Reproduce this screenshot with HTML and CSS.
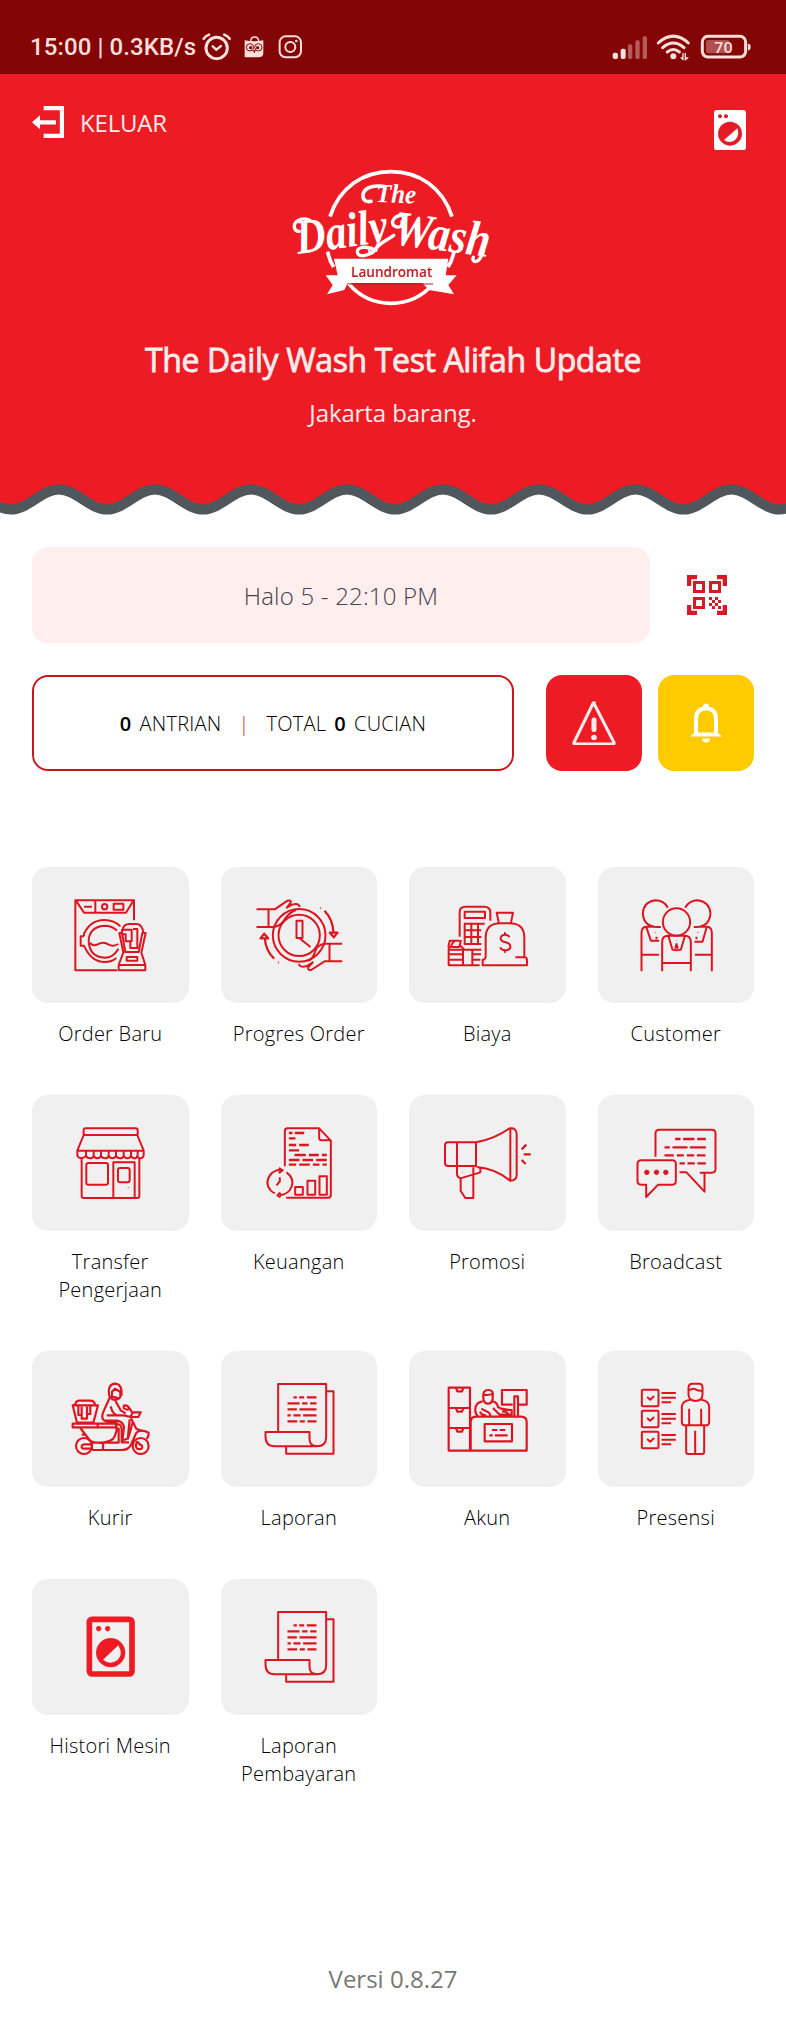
FILE: index.html
```html
<!DOCTYPE html>
<html lang="id">
<head>
<meta charset="utf-8">
<title>The Daily Wash</title>
<link rel="stylesheet" href="styles.css">
</head>
<body>
<svg class="defs" width="0" height="0" aria-hidden="true">
  <symbol id="report" viewBox="571.5 17 469.5 408">
    <path d="M743 258V116h144v159q0 28-28 28H732q-27 0-27-30v-13h132v20q0 22 22 22M889 138h20v187H767v-20"/>
    <path class="thick" d="M789 156h10m7 0h15m8 0h29M771 174h36m8 0h16m8 0h19M771 192h28m8 0h51M771 210h10m8 0h21m8 0h40M771 228h29m8 0h15m8 0h27"/>
  </symbol>
</svg>

<div class="statusbar">
  <span class="clock">15:00 | 0.3KB/s</span>
  <svg class="status-left" viewBox="606 95 304 90">
    <g fill="none" stroke="#ffdfdc" stroke-linecap="round">
      <circle cx="650" cy="143" r="32" stroke-width="9"/>
      <path d="M638 138l11 10 14-11" stroke-width="7"/>
      <path d="M611 115q6-9 16-12M689 115q-6-9-16-12" stroke-width="8"/>
      <rect x="839" y="108" width="64" height="63" rx="18" stroke-width="6"/>
      <circle cx="871" cy="140" r="15" stroke-width="6"/>
      <path d="M752 124q0-14 12-14t12 14" stroke-width="4"/>
    </g>
    <circle cx="889" cy="122" r="4" fill="#ffdfdc"/>
    <path d="M734 120q28 5 56 0v37q0 14-14 14h-42z" fill="#ffdfdc"/>
    <g fill="none" stroke="#840505" stroke-width="3"><circle cx="750" cy="141" r="11"/><circle cx="775" cy="141" r="11"/></g>
    <g fill="#840505"><circle cx="752" cy="142" r="5"/><circle cx="773" cy="142" r="5"/><path d="M758 150h10l-5 9z"/></g>
  </svg>
  <svg class="status-right" viewBox="655 95 424 90">
    <g fill="#ffdfdc">
      <rect x="660" y="157" width="16" height="19" rx="6"/><rect x="684" y="145" width="15" height="31" rx="6"/>
      <g opacity=".4"><rect x="706" y="132" width="13" height="44" rx="5"/><rect x="728" y="120" width="13" height="56" rx="5"/><rect x="750" y="108" width="13" height="68" rx="5"/></g>
      <circle cx="842" cy="168" r="9"/>
      <path d="M862 171h7v-13h4v22h-3zM876 158l4 0v13h9l-9 9h-4z"/>
      <path d="M1066 130q8 0 8 10t-8 10z"/>
    </g>
    <g fill="none" stroke="#ffdfdc" stroke-width="9" stroke-linecap="round">
      <path d="M797 128q45-41 90 0M810 142q32-28 64 0M824 155q18-15 36 0"/>
      <rect x="929" y="108" width="130" height="62" rx="17"/>
    </g>
    <rect x="940" y="119" width="71" height="40" rx="7" fill="#ffdfdc" opacity=".35"/>
    <text class="battery" x="965" y="158" textLength="55" lengthAdjust="spacingAndGlyphs">70</text>
  </svg>
</div>

<header class="hero">
  <div class="hero-top">
    <a class="logout">
      <svg viewBox="96 318 96 96" width="32" height="32"><path fill="none" stroke="#fff" stroke-width="13" d="M131 324h55v84h-55M114 367h54"/><path fill="#fff" d="M96 367l24-21v42z"/></svg>
      <span>KELUAR</span>
    </a>
    <svg class="machine" viewBox="963 330 96 121">
      <rect x="963" y="330" width="96" height="121" rx="9" fill="#fff"/>
      <g fill="#d51a2c"><circle cx="981" cy="349" r="6"/><circle cx="999" cy="349" r="6"/><circle cx="1011" cy="401" r="36" fill="#e41c28"/></g>
      <path fill="#fff" d="M1033 385l-40 35q17 12 34-1 14-14 6-34z"/>
    </svg>
  </div>
  <svg class="logo" viewBox="0 0 720 480">
    <g fill="none" stroke="#fff" stroke-width="11">
      <path d="M180 185C208 98 278 50 363 50s155 48 183 135M173 290q5 27 18 46M552 290q-5 27-18 46M236 386c34 40 77 59 127 59s93-19 127-59"/>
    </g>
    <path fill="#fff" d="M192 311h343l-8 50h33l-25 29 17 28-75-13-20-21H233l-10 21-52 13 17-28-21-29h36z"/>
    <path d="M237 387h252" stroke="#b81924" stroke-width="3"/>
    <g class="script">
      <text x="318" y="143" font-size="80" textLength="120" lengthAdjust="spacingAndGlyphs" transform="rotate(2 375 130)">The</text>
      <text x="84" y="297" font-size="148" textLength="276" lengthAdjust="spacingAndGlyphs" transform="rotate(-8 86 296)">Daily</text>
      <text x="366" y="266" font-size="148" textLength="292" lengthAdjust="spacingAndGlyphs" transform="rotate(8 366 264)">Wash</text>
    </g>
    <g fill="none" stroke="#fff" stroke-linecap="round">
      <path stroke-width="11" d="M343 95c-42-8-64 9-64 27 0 15 12 20 24 17"/>
      <path stroke-width="10" d="M118 195c-28-10-47 6-45 22q3 13 15 12"/>
      <path stroke-width="10" d="M318 286c-30-14-56-12-56 5 0 16 35 15 54-8 14-20 33-26 55-42"/>
      <path stroke-width="10" d="M398 180c-30 2-37 25-23 34 14 7 24-3 21-14M640 286q-8 32-24 34-10-2-6-13"/>
    </g>
    <text class="ribbon" x="243" y="367" textLength="244" lengthAdjust="spacingAndGlyphs">Laundromat</text>
  </svg>
  <h1>The Daily Wash Test Alifah Update</h1>
  <p class="address">Jakarta barang.</p>
  <svg class="wave" viewBox="0 0 786 36">
    <path fill="#fff" stroke="#4f575d" stroke-width="10" d="M-85 50V30.500C-67.500 30.500-54.600 10.500-37.100 10.500S-6.600 30.500 10.900 30.500 41.400 10.500 58.900 10.500 89.500 30.500 107 30.500 137.500 10.500 155 10.500 185.500 30.500 203 30.500 233.500 10.500 251 10.500 281.500 30.500 299 30.500 329.500 10.500 347 10.500 377.500 30.500 395 30.500 425.500 10.500 443 10.500 473.500 30.500 491 30.500 521.500 10.500 539 10.500 570 30.500 587.500 30.500 618 10.500 635.500 10.500 666 30.500 683.500 30.500 714 10.500 731.500 10.500 762 30.500 779.500 30.500 810 10.500 827.500 10.500V50z"/>
  </svg>
</header>

<main>
  <div class="greeting">
    <div class="hello">Halo 5 - 22:10 PM</div>
    <svg class="qr" viewBox="0 0 40 40">
      <g fill="none" stroke="#d71a25" stroke-width="4"><path d="M2 11V2h8M30 2h8v9M2 30v8h8M30 38h8v-8" stroke-width="4.500"/><g stroke-width="3"><rect x="7.500" y="7.500" width="9" height="9"/><rect x="23.500" y="7.500" width="9" height="9"/><rect x="7.500" y="23.500" width="9" height="9"/></g></g>
      <path fill="#d71a25" d="M22 22h3v3h-3zM28 22h3v3h-3zM25 25h3v3h-3zM31 25h3v3h-3zM22 28h3v3h-3zM28 28h3v3h-3zM25 31h3v3h-3zM31 31h3v3h-3z"/>
    </svg>
  </div>

  <div class="stats">
    <div class="queue"><b>0</b><span>ANTRIAN</span><i>|</i><span>TOTAL</span><b>0</b><span>CUCIAN</span></div>
    <a class="action alert">
      <svg viewBox="0 0 44 44" width="44" height="44"><path d="M22 2.500L42 41.500Q42.500 43 41 43H3Q1.500 43 2 41.500L21 2.500Q22 1 23 2.500" fill="none" stroke="#ffecec" stroke-width="3" stroke-linejoin="round"/><path d="M22 19v9.500" stroke="#ffecec" stroke-width="5" stroke-linecap="round"/><circle cx="22" cy="36.500" r="2.800" fill="#ffecec"/></svg>
    </a>
    <a class="action bell">
      <svg viewBox="0 0 32 40" width="32" height="40"><path d="M6 31V16Q6 5.500 16 5.500T26 16V31" fill="none" stroke="#fff" stroke-width="4"/><path d="M13 6V3.500a3 3 0 0 1 6 0V6zM0 33.500l4.500-4h23l4.500 4zM12 35.500h8q0 4-4 4t-4-4" fill="#fff"/></svg>
    </a>
  </div>

  <nav class="menu">
    <a class="item"><svg class="tile" viewBox="6 21 469.5 408">
      <path d="M262 331H136V121h176v60M138 122l24 36h126l22-36M196 122v36M162 140h24M251 131h29v18h-29zM162 229v-8q20-41 61-41 30 0 48 19M162 229h-10v28h10q21 49 62 49 22 0 35-12M261 212q-14-15-38-15-47 4-47 48 4 47 48 48 27 0 41-27M180 249q11 11 23 4 18-10 33 1 13 7 29-2"/>
      <circle cx="224" cy="140" r="8"/>
      <path d="M268 219h8l10 57h40l11-57h10l-13 59 12 37v16h-80v-16l14-37zM266 315h80M290 291h32v11h-32zM278 209q3-17 20-17h21q18 0 21 27M276 209h29v35h-18v-21h-11zM309 207h13v57h-21v-18"/>
    </svg><span>Order Baru</span></a>
    <a class="item"><svg class="tile" viewBox="571.5 21 469.5 408">
      <circle cx="806" cy="226" r="79"/><circle cx="806" cy="226" r="62"/>
      <path d="M678 148h55l38-26q11-3 10 5l-12 16 16-9q20-6 23 7M678 201h45q18 1 31-12l15-20q13-14 27-19M714 150v49M798 182h18v52h-18zM807 235l33 26"/>
      <path d="M935 251h-49q-14 0-27 12l-10 23q-5 13-18 16M935 304h-53l-40 26q-10 2-9-8l14-15-20 12q-20 4-22-7M897 253v49"/>
      <path d="M743 307l2 1M731 296q-26-25-28-62M690 235l11-14 12 14zM869 144l2 1M882 152q25 26 27 65M898 218l12 14 11-14z" class="thick"/>
    </svg><span>Progres Order</span></a>
    <a class="item"><svg class="tile" viewBox="27 21 469.5 408">
      <path d="M179 230v-74q0-16 18-16h55q19 0 19 17v25M194 155h61v19h-61zM254 191h-60v61h50M194 211h50M194 231h50M214 191v61M234 191v61M145 262l4-20h30M146 265v51h93M146 265q3-6 12-4h20l5-21M152 261q5-13 14-20M181 257l12 12M146 269h98M146 283h42M146 299h42M189 267v49M217 267v49M219 283h24M219 299h22"/>
      <path d="M296 187l-6-29h49l-6 29M257 293v-60q0-43 45-43h26q45 0 45 43v59M346 292h28q7 0 7 10v14H248v-16q9-3 9-10M328 232q-2-8-12-8-14 0-14 11 0 9 14 12 15 3 15 12 0 12-15 12-13 0-15-9M315 217v7M315 271v7"/>
    </svg><span>Biaya</span></a>
    <a class="item"><svg class="tile" viewBox="592.5 21 469.5 408">
      <path d="M802 143q-12-22-37-22-36 4-38 40 3 39 43 40h11M854 143q13-22 37-22 36 4 39 40-4 39-42 40h-8M723 334V219q0-18 14-19h25M934 334V219q0-18-14-19h-25M724 284h51M883 284h50M738 203l13 39h25M918 203l-12 42h-24M764 217v1M768 230v8M892 217v1M888 230v8"/>
      <circle cx="828" cy="186" r="41"/>
      <path d="M785 334V246q0-19 18-19h49q19 0 19 19v88M786 309h86M804 229l12 40q12 4 25 0l12-40M828 240v1M824 266l4-14 4 14"/>
    </svg><span>Customer</span></a>

    <a class="item"><svg class="tile" viewBox="6 15 469.5 408">
      <path d="M161 135v-14q0-6 6-6h150q6 0 6 6v14zM161 135l-19 47v15q4 9 14 7 9-1 12-7 3 8 12 8t11-8q3 8 11 8t11-8q3 8 12 8t11-8q3 8 11 8t11-8q3 8 12 8t11-8q3 8 11 8t11-8q3 8 10 8t9-8q2 8 9 8t10-8v-15l-19-47M142 182h200M168 184v13M191 184v13M213 184v13M236 184v13M258 184v13M281 184v13M303 184v13M323 184v13M155 206v112q0 6 6 6h161q6 0 6-6V206M250 323V217h64v105"/>
      <rect x="169" y="219" width="65" height="65" rx="6"/><rect x="264" y="234" width="35" height="43" rx="6"/><path d="M296 292v1"/>
    </svg><span>Transfer Pengerjaan</span></a>
    <a class="item"><svg class="tile" viewBox="571.5 15 469.5 408">
      <path d="M763 229V123q0-8 8-8h95l35 37v163q0 8-8 8H767M866 116v28q0 7 7 7h27M794 291h23v23h-23zM831 272h23v42h-23zM867 259h22v55h-22zM759 241q-18-6-35 8-25 27-3 53 5 5 12 8M768 247q25 18 15 44-9 22-35 25M748 262v12l-10 12"/>
      <path class="thick" d="M745 234l10 7-10 8M750 308l-9 8 9 6M775 129h11m7 0h28M775 145h20M775 165h22m9 0h29M775 181h31M792 195h34m9 0h30m9 0h15M775 210h32m9 0h32m9 0h32M775 224h22m9 0h32m9 0h20m9 0h13"/>
    </svg><span>Keuangan</span></a>
    <a class="item"><svg class="tile" viewBox="27 15 469.5 408">
      <path d="M228 157h-84q-9 0-9 9v53q0 9 9 9h84zM171 157v71M228 157q54-9 101-42 21-2 21 18v121q0 18-20 18-40-35-100-41M331 115v156M171 230v22q0 9 10 13l60-18v-14M182 265v38l14 21h24v-92M187 246v1"/>
      <path class="thick" d="M365 178l14-14M371 193h21M365 210l12 12"/>
    </svg><span>Promosi</span></a>
    <a class="item"><svg class="tile" viewBox="592.5 15 469.5 408">
      <path d="M765 200v-70q0-11 11-11h158q11 0 11 11v107q0 11-11 11H898M837 247h21l54 58v-55M722 211h93q11 0 11 11v51q0 11-11 11h-42l-36 37v-37h-15q-11 0-11-11v-51q0-11 11-11z"/>
      <path class="thick" d="M824 147h16m8 0h34m8 0h26M792 172h16m8 0h45m7 0h48M792 196h28m9 0h21m9 0h22m8 0h26M837 220h16m8 0h22m8 0h25"/>
      <g class="solid"><circle cx="739" cy="247" r="7"/><circle cx="768" cy="247" r="7"/><circle cx="796" cy="247" r="7"/></g>
    </svg><span>Broadcast</span></a>

    <a class="item"><svg class="tile" viewBox="6 17 469.5 408">
      <g class="heavy"><path d="M136 178l-8 2 13 52h49l14-52H128M136 178q1-12 13-12h30q15 0 16 13M145 182v27h10v-25M155 184v36h16v-36M171 184v22h10v-24M128 235h130v11H128zM203 236v10M151 248l30 39q34 14 68-6 15-22 10-44M187 292h79v-45M187 292q-4 13 1 22h86q23 0 30-18l14-32q12-15 38-2 0 14-7 18M219 293v20M259 236q16 0 16 16v39h22M155 268h12"/>
      <circle cx="162" cy="302" r="24"/><path d="M183 297h-20q-9 1-8 8 0 5 7 5h21"/>
      <circle cx="332" cy="302" r="24"/><path d="M322 287q-9 18 1 24 17 3 13-10-9-2-13-12"/>
      <path d="M238 152q-7-36 18-37 22 2 18 37M246 155v-16l9-9 16 10v16q-9 5-16-1zM238 152l9 10q16 3 22-4M240 155l-21 47q-6 17 4 24h39q17 4 20 19l-5 42M230 210h52l20 5h23l7-14h-24l-6 13M242 183l5 15q4 8 14 12M255 164q10 18 17 31l15 9M281 181q11-4 18 9-9 6-18-2zM299 190l8 12M223 226q12 7 40 6M299 222l-6 61M303 219l16 31 18 8M307 232q-5 25-13 47l-19 8"/></g>
    </svg><span>Kurir</span></a>
    <a class="item"><svg class="tile"><use href="#report"/></svg><span>Laporan</span></a>
    <a class="item"><svg class="tile" viewBox="27 17 469.5 408">
      <path class="heavy" d="M146 127h64v189h-64zM146 188h64M146 248h64"/>
      <path class="heavy" d="M168 128l4 10h14l4-10M168 189l4 10h14l4-10M168 249l4 10h14l4-10"/>
      <path class="heavy" d="M212 316V230q0-16 17-16h133q18 0 18 16v86zM254 236h82v52h-82zM276 254h16m7 0h17M268 270h10m7 0h38M338 178h-32v-44h74v44h-24M343 213v-60h11v60M233 212q-8-7-7-21 1-20 22-23M278 168q13 2 16 17l9 5q16 4 32 4v14h-36l-20-20M250 154q-2-20 15-20t13 20v7q-3 14-14 14t-14-14zM250 148q18 3 28-3M244 190l13 7q13 4 14 14M240 199q4 11 18 11M306 199q15-3 22 12"/>
    </svg><span>Akun</span></a>
    <a class="item"><svg class="tile" viewBox="592.5 17 469.5 408">
      <rect x="724" y="133" width="50" height="50" rx="3"/><path d="M740 155l9 8 12-11M783 143h43M783 157h43M783 171h29"/>
      <rect x="724" y="196" width="50" height="50" rx="3"/><path d="M740 218l9 8 12-11M783 206h43M783 220h43M783 234h29"/>
      <rect x="724" y="259" width="50" height="50" rx="3"/><path d="M740 281l9 8 12-11M783 269h43M783 283h43M783 297h29"/>
      <path d="M864 133v-6q0-12 12-12h20q10 0 10 12v20q0 20-22 20-20-2-20-20zM865 135q14-8 20-3 10 6 20 4M869 163q-23 3-25 20v46q0 11 10 11h62q10 0 10-11v-43q0-20-24-23M866 190v50M902 190v50M857 241v79q0 6 6 6h42q6 0 6-6v-79M884 256v69"/>
    </svg><span>Presensi</span></a>

    <a class="item"><svg class="tile" viewBox="6 26 469.5 408">
      <rect x="178" y="147" width="128" height="164" rx="8" class="frame"/>
      <g class="solid bright"><circle cx="206" cy="175" r="7"/><circle cx="233" cy="175" r="7"/><circle cx="242" cy="247" r="43"/></g>
      <path class="drum" d="M265 225l-46 43q21 17 43 2 19-18 3-45z"/>
    </svg><span>Histori Mesin</span></a>
    <a class="item"><svg class="tile"><use href="#report"/></svg><span>Laporan Pembayaran</span></a>
  </nav>
</main>
<footer>Versi 0.8.27</footer>
</body>
</html>
```
FILE: styles.css
```css
* { box-sizing: border-box; }
body { margin: 0; height: 2026px; display: flex; flex-direction: column; background: #fff; font-family: "Open Sans", sans-serif; color: #000; }
svg { display: block; flex: none; }
.defs { position: absolute; }

.statusbar { height: 74px; background: #840505; display: flex; align-items: flex-end; padding: 0 26px 12px 30px; }
.clock { width: 172px; font: 500 24px/30px Roboto, sans-serif; letter-spacing: .1px; color: #ffdfdc; white-space: nowrap; }
.status-left { width: 101.300px; height: 30px; }
.status-right { width: 141.300px; height: 30px; margin-left: auto; margin-right: 8px; }
.battery { font: 500 44px Roboto, sans-serif; fill: #ffdfdc; }

.hero { height: 441px; background: #ed1c24; color: #ffecec; display: flex; flex-direction: column; }
.hero-top { height: 81px; padding: 32px 40px 0 32px; display: flex; justify-content: space-between; align-items: flex-start; }
.logout { display: flex; gap: 16px; font-size: 24px; line-height: 33px; letter-spacing: -.2px; }
.machine { width: 32px; height: 40.300px; margin-top: 4px; }
.logo { width: 240px; height: 160px; margin-left: 270px; }
.script text { font-family: "Liberation Serif", serif; font-style: italic; font-weight: 700; fill: #fff; }
.ribbon { font: 600 43px "Open Sans", sans-serif; fill: #c01a26; }
h1 { margin: 23px 0 0; font-size: 32px; line-height: 44px; font-weight: 400; letter-spacing: -.380px; -webkit-text-stroke: .8px #ffecec; text-align: center; }
.address { margin: 14px 0 0; font-size: 24px; line-height: 33px; letter-spacing: -.1px; text-align: center; }
.wave { width: 786px; height: 36px; margin-top: auto; }

main { padding: 32px 32px 0; }
.greeting { display: flex; align-items: center; }
.hello { width: 618px; height: 96px; border-radius: 16px; background: #ffeeee; color: #45404a; font-size: 24px; font-weight: 360; letter-spacing: .2px; line-height: 98px; text-align: center; }
.qr { width: 40px; height: 40px; margin-left: 37px; }
.stats { display: flex; margin-top: 32px; }
.queue { width: 482px; height: 96px; margin-right: 32px; border: 2px solid #c8161d; border-radius: 16px; display: flex; align-items: center; justify-content: center; gap: 8px; padding-top: 2px; font-size: 20px; font-weight: 350; line-height: 28px; letter-spacing: .25px; }
.queue b { font-weight: 600; }
.queue i { font-style: normal; color: #d71a25; margin: 0 9px; }
.action { width: 96px; height: 96px; border-radius: 16px; display: flex; align-items: center; justify-content: center; }
.alert { background: #ed1c24; margin-right: 16px; }
.bell { background: #ffcb00; }

.menu { margin-top: 96px; display: grid; grid-template-columns: repeat(4, 156.500px); column-gap: 32px; row-gap: 47px; }
.item { display: flex; flex-direction: column; align-items: center; font-size: 20px; font-weight: 350; line-height: 28px; letter-spacing: .25px; text-align: center; }
.item span { padding: 0 8px; }
.tile { width: 156.500px; height: 136px; border-radius: 16px; background: #f0f0f0; margin-bottom: 17px; fill: none; stroke: #dc1620; stroke-width: 6; stroke-linejoin: round; }
.thick { stroke-width: 6.800; }
.heavy { stroke-width: 6.500; }
.solid { fill: #dc1620; stroke-width: 2; }
.bright { stroke: #ed1c24; fill: #ed1c24; }
.frame { stroke: #ed1c24; stroke-width: 17; }
.drum { fill: #f0f0f0; stroke: none; }
footer { margin-top: auto; padding-bottom: 31px; font-size: 24px; font-weight: 370; line-height: 33px; text-align: center; color: #777; }
```
